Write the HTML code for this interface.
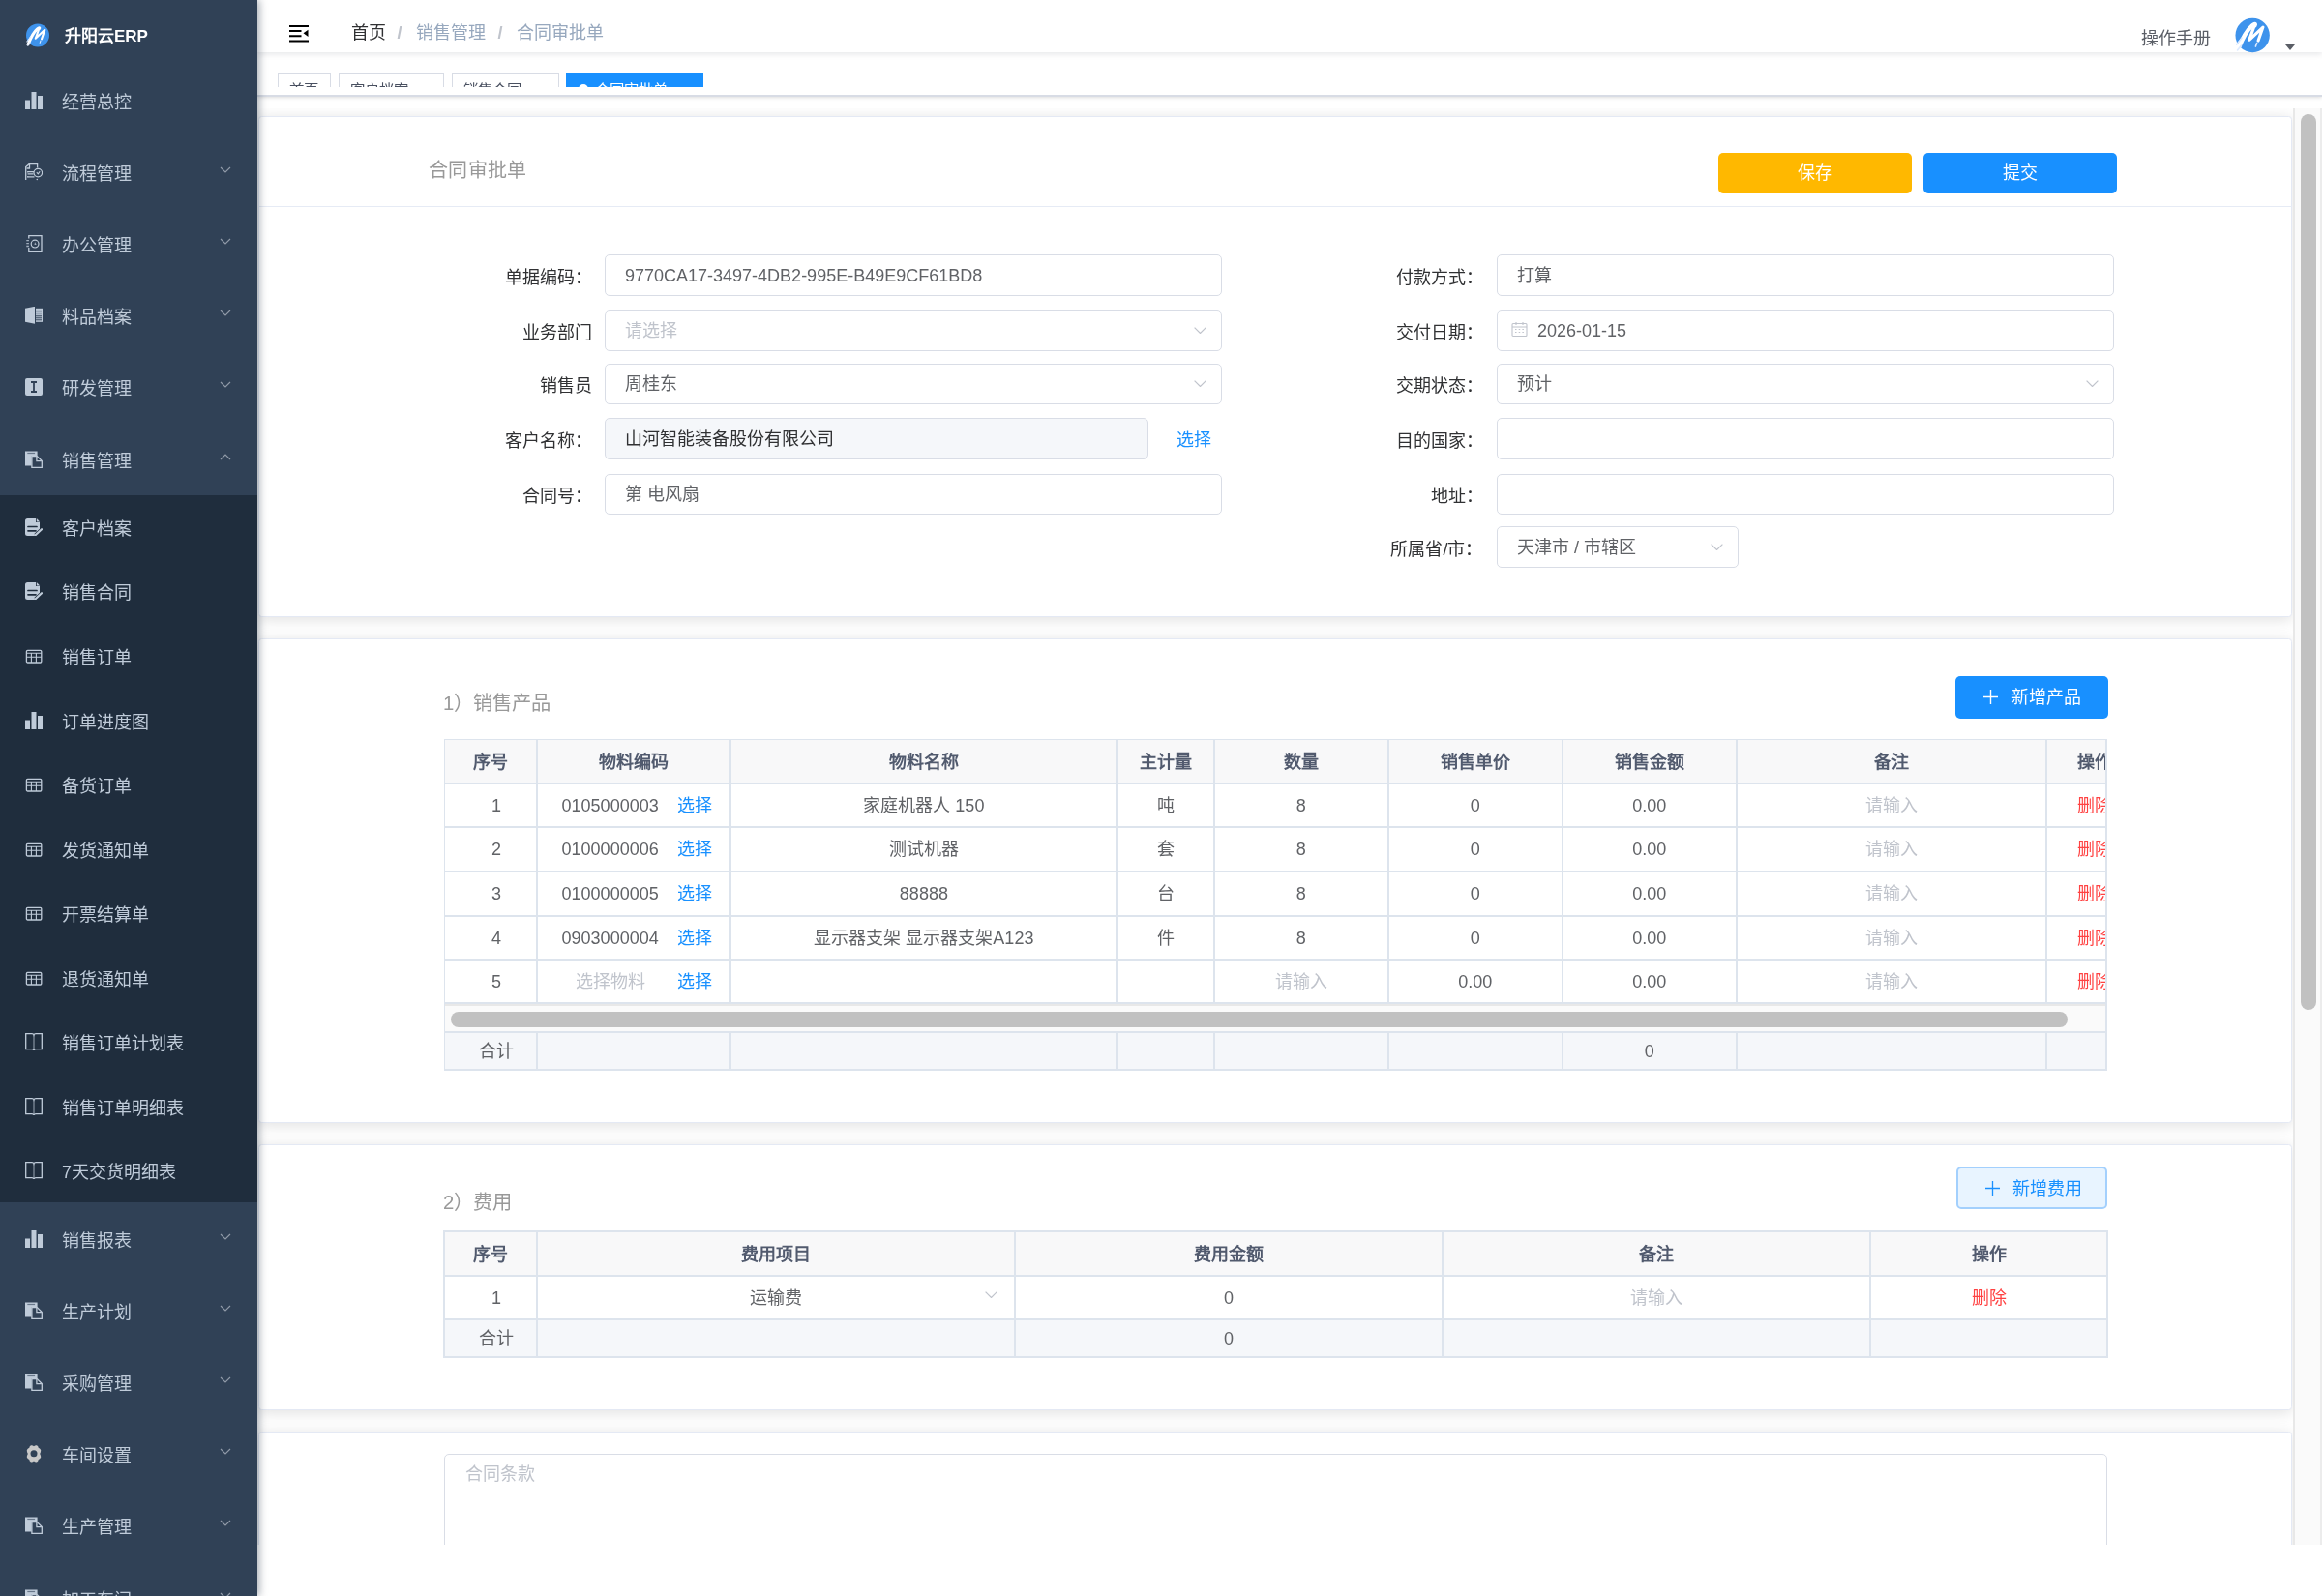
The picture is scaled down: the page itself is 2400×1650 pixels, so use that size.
<!DOCTYPE html><html lang="zh-CN"><head><meta charset="utf-8"><title>合同审批单</title><style>
*{box-sizing:border-box;margin:0;padding:0}
html,body{width:2400px;height:1650px;overflow:hidden;background:#fff;font-family:'Liberation Sans',sans-serif;font-size:18px;color:#606266}
.a{position:absolute}
#side,#nav,#tags,#scroll{will-change:transform}
.t{position:absolute;white-space:nowrap;line-height:1}
#side{left:0;top:0;width:266px;height:1650px;background:#304156;box-shadow:2px 0 8px rgba(0,21,41,.35);z-index:5;overflow:hidden}
.mi{position:absolute;left:0;width:266px;color:#bfcbd9;font-size:18px}
.mi .tx{position:absolute;left:64px;white-space:nowrap}
.mi svg.ic{position:absolute;left:26px}
.chev{position:absolute;left:227px;width:12px;height:7px}
#nav{left:266px;top:0;width:2134px;height:54px;background:#fff;box-shadow:0 1.5px 6px rgba(0,21,41,.1);z-index:3}
#tags{left:266px;top:54px;width:2134px;height:46px;background:#fff;border-bottom:2px solid #d8dce5;box-shadow:0 1px 4px 0 rgba(0,0,0,.12),0 0 4px 0 rgba(0,0,0,.04);z-index:2}
#scroll{left:266px;top:112px;width:2134px;height:1485px;overflow:hidden;background:#fff;z-index:1}
.card{position:absolute;left:1.3px;width:2102px;background:#fff;border:1.7px solid #e4e9f4;border-radius:3.5px;box-shadow:0 2.6px 15px 0 rgba(0,0,0,.12)}
.lbl{position:absolute;text-align:right;color:#303133;font-size:18px;white-space:nowrap}
.inp{position:absolute;border:1.8px solid #d9dde6;border-radius:5px;background:#fff}
.inp .v{position:absolute;left:21px;white-space:nowrap;color:#606266}
.ph{color:#c0c4cc!important}
.btn{position:absolute;border-radius:5px;color:#fff;font-size:18px;text-align:center}
table.tb{position:absolute;border-collapse:collapse;table-layout:fixed;font-size:18px;color:#606266}
table.tb td,table.tb th{border:1.3px solid #dfe6ec;text-align:center;white-space:nowrap;overflow:hidden;padding:0}
table.tb th{background:#f8f8f9;color:#515a6e;font-weight:bold}
.lnk{color:#1890ff}
.del{color:#ff4242}
</style></head><body>
<div id="side" class="a">
<svg class="a" style="left:26px;top:24px" width="26" height="26" viewBox="0 0 26 26"><circle cx="13" cy="12.5" r="12" fill="#3e93ec"/>
<path d="M3 22 C5 17 9 9 12.5 6 C13.5 5 15.5 4 14.6 5.5" fill="none" stroke="#fff" stroke-width="3" stroke-linecap="round"/>
<path d="M14.6 5 L10.7 15.8 L20.3 6.8 L17 16.3" fill="none" stroke="#fff" stroke-width="2.1" stroke-linecap="round" stroke-linejoin="round"/>
<path d="M1.8 19l3.6-4.6M2.4 23l2.6-3.2M16 18l-.8 2.4" stroke="#dceaff" stroke-width="1.1" stroke-linecap="round"/></svg>
<div class="t" style="left:67px;top:29px;font-size:17px;font-weight:bold;color:#fff">升阳云ERP</div>
<div class="mi" style="top:66.50px;height:74.2px">
<svg class="ic" width="18" height="18" viewBox="0 0 18 18" style="top:28.1px"><path d="M0 8.5h5V18H0zM6.5 0h5v18h-5zM13 4h5v14h-5z" fill="#bfcbd9"/></svg>
<div class="tx" style="top:30.10px;line-height:1">经营总控</div>
</div>
<div class="mi" style="top:140.70px;height:74.2px">
<svg class="ic" width="18" height="18" viewBox="0 0 18 18" style="top:28.1px"><path d="M0.7 17V3.6L4 0.7h8.6v3.8" fill="none" stroke="#bfcbd9" stroke-width="1.3"/><path d="M4.5 1v4H1.5" fill="none" stroke="#bfcbd9" stroke-width="1.3"/><path d="M2.5 8.7h6.5M2.5 10.8h6M2.5 13.8h7" stroke="#bfcbd9" stroke-width="1.2"/><path d="M2.2 8.7h1M2.2 13.8h1" stroke="#bfcbd9" stroke-width="1.4"/><circle cx="13.3" cy="9.6" r="4.3" fill="#304156" stroke="#bfcbd9" stroke-width="1.2"/><path d="M11.8 9.2l1.5 1.6 1.9-2.6" fill="none" stroke="#bfcbd9" stroke-width="1.1"/><circle cx="12.3" cy="16.5" r=".8" fill="#bfcbd9"/></svg>
<div class="tx" style="top:30.10px;line-height:1">流程管理</div>
<svg class="chev" viewBox="0 0 12 7" style="top:31.10px"><path d="M1 1 L6 6 L11 1" fill="none" stroke="#909aa8" stroke-width="1.2"/></svg>
</div>
<div class="mi" style="top:214.90px;height:74.2px">
<svg class="ic" width="18" height="18" viewBox="0 0 18 18" style="top:28.1px"><path d="M3.8 3.5V0.7h13.2v16.6H3.8V13" fill="none" stroke="#bfcbd9" stroke-width="1.3"/><path d="M1.3 5.6h2.6M1.3 8.7h2.6M1.3 11.5h2.6" stroke="#bfcbd9" stroke-width="1.3" opacity=".8"/><circle cx="10.1" cy="9.1" r="3.9" fill="none" stroke="#bfcbd9" stroke-width="1.2"/><path d="M10.1 7.3l1.6 2.8h-2.2z" fill="#bfcbd9" opacity=".8"/></svg>
<div class="tx" style="top:30.10px;line-height:1">办公管理</div>
<svg class="chev" viewBox="0 0 12 7" style="top:31.10px"><path d="M1 1 L6 6 L11 1" fill="none" stroke="#909aa8" stroke-width="1.2"/></svg>
</div>
<div class="mi" style="top:289.10px;height:74.2px">
<svg class="ic" width="18" height="18" viewBox="0 0 18 18" style="top:28.1px"><path d="M0 1.8L10 -0.2v18L0 15.8z" fill="#bfcbd9"/><rect x="11" y="1.8" width="7" height="14" fill="#bfcbd9"/><path d="M11 3.8h6M11 5.8h6M11 7.8h6" stroke="#8593a6" stroke-width=".9"/><path d="M11 9.8h6M11 11.8h6M11 13.8h6" stroke="#304156" stroke-width="1"/></svg>
<div class="tx" style="top:30.10px;line-height:1">料品档案</div>
<svg class="chev" viewBox="0 0 12 7" style="top:31.10px"><path d="M1 1 L6 6 L11 1" fill="none" stroke="#909aa8" stroke-width="1.2"/></svg>
</div>
<div class="mi" style="top:363.30px;height:74.2px">
<svg class="ic" width="18" height="18" viewBox="0 0 18 18" style="top:28.1px"><rect x="0" y="0" width="18" height="18" rx="2" fill="#bfcbd9"/><path d="M6 4h6M9 4v10M6 14h6" stroke="#304156" stroke-width="1.8"/></svg>
<div class="tx" style="top:30.10px;line-height:1">研发管理</div>
<svg class="chev" viewBox="0 0 12 7" style="top:31.10px"><path d="M1 1 L6 6 L11 1" fill="none" stroke="#909aa8" stroke-width="1.2"/></svg>
</div>
<div class="mi" style="top:437.50px;height:74.2px">
<svg class="ic" width="18" height="18" viewBox="0 0 18 18" style="top:28.1px"><path d="M0 0.4h12.6v4.6H6.6v10.4H0z" fill="#bfcbd9"/><path d="M2.3 1.9h7.8v1.2H2.3z" fill="#304156" opacity=".6"/><path d="M6.9 5.6h5.4l5 5v6.8H6.9z" fill="none" stroke="#bfcbd9" stroke-width="1.3"/><path d="M11.9 5.8v4.8h5" fill="none" stroke="#bfcbd9" stroke-width="1.3"/></svg>
<div class="tx" style="top:30.10px;line-height:1">销售管理</div>
<svg class="chev" viewBox="0 0 12 7" style="top:31.10px"><path d="M1 6 L6 1 L11 6" fill="none" stroke="#909aa8" stroke-width="1.2"/></svg>
</div>
<div class="a" style="left:0;top:511.70px;width:266px;height:731.72px;background:#1f2d3d"></div>
<div class="mi" style="top:511.70px;height:66.52px">
<svg class="ic" width="18" height="18" viewBox="0 0 18 18" style="top:24.259999999999998px"><path d="M0 2.5Q0 0 2.5 0H11v4h4v8.5l-5.5 5.5H2.5Q0 18 0 15.5z" fill="#bfcbd9"/><path d="M11.8 0l3.4 3.4h-3.4z" fill="#bfcbd9"/><path d="M3 8.5h9M3 12.8h8" stroke="#1f2d3d" stroke-width="1.7" stroke-linecap="round"/><path d="M10.6 17.2l6.4-6" stroke="#1f2d3d" stroke-width="3.6"/><path d="M10.6 17.2l6.4-6" stroke="#bfcbd9" stroke-width="2.2" stroke-linecap="round"/></svg>
<div class="tx" style="top:26.26px;line-height:1">客户档案</div>
</div>
<div class="mi" style="top:578.22px;height:66.52px">
<svg class="ic" width="18" height="18" viewBox="0 0 18 18" style="top:24.259999999999998px"><path d="M0 2.5Q0 0 2.5 0H11v4h4v8.5l-5.5 5.5H2.5Q0 18 0 15.5z" fill="#bfcbd9"/><path d="M11.8 0l3.4 3.4h-3.4z" fill="#bfcbd9"/><path d="M3 8.5h9M3 12.8h8" stroke="#1f2d3d" stroke-width="1.7" stroke-linecap="round"/><path d="M10.6 17.2l6.4-6" stroke="#1f2d3d" stroke-width="3.6"/><path d="M10.6 17.2l6.4-6" stroke="#bfcbd9" stroke-width="2.2" stroke-linecap="round"/></svg>
<div class="tx" style="top:26.26px;line-height:1">销售合同</div>
</div>
<div class="mi" style="top:644.74px;height:66.52px">
<svg class="ic" width="18" height="18" viewBox="0 0 18 18" style="top:24.259999999999998px"><rect x="1.4" y="3.4" width="15.4" height="12.6" rx="1.2" fill="none" stroke="#bfcbd9" stroke-width="1.3"/><path d="M1.4 6.3h15.4M1.4 10.3h15.4M6.4 6.3v9.7M11.4 6.3v9.7" stroke="#bfcbd9" stroke-width="1.1"/></svg>
<div class="tx" style="top:26.26px;line-height:1">销售订单</div>
</div>
<div class="mi" style="top:711.26px;height:66.52px">
<svg class="ic" width="18" height="18" viewBox="0 0 18 18" style="top:24.259999999999998px"><path d="M0 8.5h5V18H0zM6.5 0h5v18h-5zM13 4h5v14h-5z" fill="#bfcbd9"/></svg>
<div class="tx" style="top:26.26px;line-height:1">订单进度图</div>
</div>
<div class="mi" style="top:777.78px;height:66.52px">
<svg class="ic" width="18" height="18" viewBox="0 0 18 18" style="top:24.259999999999998px"><rect x="1.4" y="3.4" width="15.4" height="12.6" rx="1.2" fill="none" stroke="#bfcbd9" stroke-width="1.3"/><path d="M1.4 6.3h15.4M1.4 10.3h15.4M6.4 6.3v9.7M11.4 6.3v9.7" stroke="#bfcbd9" stroke-width="1.1"/></svg>
<div class="tx" style="top:26.26px;line-height:1">备货订单</div>
</div>
<div class="mi" style="top:844.30px;height:66.52px">
<svg class="ic" width="18" height="18" viewBox="0 0 18 18" style="top:24.259999999999998px"><rect x="1.4" y="3.4" width="15.4" height="12.6" rx="1.2" fill="none" stroke="#bfcbd9" stroke-width="1.3"/><path d="M1.4 6.3h15.4M1.4 10.3h15.4M6.4 6.3v9.7M11.4 6.3v9.7" stroke="#bfcbd9" stroke-width="1.1"/></svg>
<div class="tx" style="top:26.26px;line-height:1">发货通知单</div>
</div>
<div class="mi" style="top:910.82px;height:66.52px">
<svg class="ic" width="18" height="18" viewBox="0 0 18 18" style="top:24.259999999999998px"><rect x="1.4" y="3.4" width="15.4" height="12.6" rx="1.2" fill="none" stroke="#bfcbd9" stroke-width="1.3"/><path d="M1.4 6.3h15.4M1.4 10.3h15.4M6.4 6.3v9.7M11.4 6.3v9.7" stroke="#bfcbd9" stroke-width="1.1"/></svg>
<div class="tx" style="top:26.26px;line-height:1">开票结算单</div>
</div>
<div class="mi" style="top:977.34px;height:66.52px">
<svg class="ic" width="18" height="18" viewBox="0 0 18 18" style="top:24.259999999999998px"><rect x="1.4" y="3.4" width="15.4" height="12.6" rx="1.2" fill="none" stroke="#bfcbd9" stroke-width="1.3"/><path d="M1.4 6.3h15.4M1.4 10.3h15.4M6.4 6.3v9.7M11.4 6.3v9.7" stroke="#bfcbd9" stroke-width="1.1"/></svg>
<div class="tx" style="top:26.26px;line-height:1">退货通知单</div>
</div>
<div class="mi" style="top:1043.86px;height:66.52px">
<svg class="ic" width="18" height="18" viewBox="0 0 18 18" style="top:24.259999999999998px"><path d="M0.7 0.7h6.3q1.6 0 2 1.2q.4-1.2 2-1.2h6.3v16h-6.3q-1.6 0-2 1.2q-.4-1.2-2-1.2H0.7z" fill="none" stroke="#bfcbd9" stroke-width="1.3"/><path d="M9 2v15" stroke="#bfcbd9" stroke-width="1.3" opacity=".6"/></svg>
<div class="tx" style="top:26.26px;line-height:1">销售订单计划表</div>
</div>
<div class="mi" style="top:1110.38px;height:66.52px">
<svg class="ic" width="18" height="18" viewBox="0 0 18 18" style="top:24.259999999999998px"><path d="M0.7 0.7h6.3q1.6 0 2 1.2q.4-1.2 2-1.2h6.3v16h-6.3q-1.6 0-2 1.2q-.4-1.2-2-1.2H0.7z" fill="none" stroke="#bfcbd9" stroke-width="1.3"/><path d="M9 2v15" stroke="#bfcbd9" stroke-width="1.3" opacity=".6"/></svg>
<div class="tx" style="top:26.26px;line-height:1">销售订单明细表</div>
</div>
<div class="mi" style="top:1176.90px;height:66.52px">
<svg class="ic" width="18" height="18" viewBox="0 0 18 18" style="top:24.259999999999998px"><path d="M0.7 0.7h6.3q1.6 0 2 1.2q.4-1.2 2-1.2h6.3v16h-6.3q-1.6 0-2 1.2q-.4-1.2-2-1.2H0.7z" fill="none" stroke="#bfcbd9" stroke-width="1.3"/><path d="M9 2v15" stroke="#bfcbd9" stroke-width="1.3" opacity=".6"/></svg>
<div class="tx" style="top:26.26px;line-height:1">7天交货明细表</div>
</div>
<div class="mi" style="top:1243.42px;height:74.2px">
<svg class="ic" width="18" height="18" viewBox="0 0 18 18" style="top:28.1px"><path d="M0 8.5h5V18H0zM6.5 0h5v18h-5zM13 4h5v14h-5z" fill="#bfcbd9"/></svg>
<div class="tx" style="top:30.10px;line-height:1">销售报表</div>
<svg class="chev" viewBox="0 0 12 7" style="top:31.10px"><path d="M1 1 L6 6 L11 1" fill="none" stroke="#909aa8" stroke-width="1.2"/></svg>
</div>
<div class="mi" style="top:1317.62px;height:74.2px">
<svg class="ic" width="18" height="18" viewBox="0 0 18 18" style="top:28.1px"><path d="M0 0.4h12.6v4.6H6.6v10.4H0z" fill="#bfcbd9"/><path d="M2.3 1.9h7.8v1.2H2.3z" fill="#304156" opacity=".6"/><path d="M6.9 5.6h5.4l5 5v6.8H6.9z" fill="none" stroke="#bfcbd9" stroke-width="1.3"/><path d="M11.9 5.8v4.8h5" fill="none" stroke="#bfcbd9" stroke-width="1.3"/></svg>
<div class="tx" style="top:30.10px;line-height:1">生产计划</div>
<svg class="chev" viewBox="0 0 12 7" style="top:31.10px"><path d="M1 1 L6 6 L11 1" fill="none" stroke="#909aa8" stroke-width="1.2"/></svg>
</div>
<div class="mi" style="top:1391.82px;height:74.2px">
<svg class="ic" width="18" height="18" viewBox="0 0 18 18" style="top:28.1px"><path d="M0 0.4h12.6v4.6H6.6v10.4H0z" fill="#bfcbd9"/><path d="M2.3 1.9h7.8v1.2H2.3z" fill="#304156" opacity=".6"/><path d="M6.9 5.6h5.4l5 5v6.8H6.9z" fill="none" stroke="#bfcbd9" stroke-width="1.3"/><path d="M11.9 5.8v4.8h5" fill="none" stroke="#bfcbd9" stroke-width="1.3"/></svg>
<div class="tx" style="top:30.10px;line-height:1">采购管理</div>
<svg class="chev" viewBox="0 0 12 7" style="top:31.10px"><path d="M1 1 L6 6 L11 1" fill="none" stroke="#909aa8" stroke-width="1.2"/></svg>
</div>
<div class="mi" style="top:1466.02px;height:74.2px">
<svg class="ic" width="18" height="18" viewBox="0 0 18 18" style="top:28.1px"><path d="M6 0.3q1.5-.4 3 .9q1.5-1.3 3-.9q1.6.6 1.7 2.5q1.9.7 2.4 2.3q.4 1.5-.9 3.8q1.3 2.3.9 3.8q-.5 1.6-2.4 2.3q-.1 1.9-1.7 2.5q-1.5.4-3-.9q-1.5 1.3-3 .9q-1.6-.6-1.7-2.5q-1.9-.7-2.4-2.3q-.4-1.5.9-3.8q-1.3-2.3-.9-3.8q.5-1.6 2.4-2.3q.1-1.9 1.7-2.5z" fill="#c8c8c8"/><circle cx="9" cy="8.8" r="3.5" fill="#304156"/></svg>
<div class="tx" style="top:30.10px;line-height:1">车间设置</div>
<svg class="chev" viewBox="0 0 12 7" style="top:31.10px"><path d="M1 1 L6 6 L11 1" fill="none" stroke="#909aa8" stroke-width="1.2"/></svg>
</div>
<div class="mi" style="top:1540.22px;height:74.2px">
<svg class="ic" width="18" height="18" viewBox="0 0 18 18" style="top:28.1px"><path d="M0 0.4h12.6v4.6H6.6v10.4H0z" fill="#bfcbd9"/><path d="M2.3 1.9h7.8v1.2H2.3z" fill="#304156" opacity=".6"/><path d="M6.9 5.6h5.4l5 5v6.8H6.9z" fill="none" stroke="#bfcbd9" stroke-width="1.3"/><path d="M11.9 5.8v4.8h5" fill="none" stroke="#bfcbd9" stroke-width="1.3"/></svg>
<div class="tx" style="top:30.10px;line-height:1">生产管理</div>
<svg class="chev" viewBox="0 0 12 7" style="top:31.10px"><path d="M1 1 L6 6 L11 1" fill="none" stroke="#909aa8" stroke-width="1.2"/></svg>
</div>
<div class="mi" style="top:1614.42px;height:74.2px">
<svg class="ic" width="18" height="18" viewBox="0 0 18 18" style="top:28.1px"><path d="M0 0.4h12.6v4.6H6.6v10.4H0z" fill="#bfcbd9"/><path d="M2.3 1.9h7.8v1.2H2.3z" fill="#304156" opacity=".6"/><path d="M6.9 5.6h5.4l5 5v6.8H6.9z" fill="none" stroke="#bfcbd9" stroke-width="1.3"/><path d="M11.9 5.8v4.8h5" fill="none" stroke="#bfcbd9" stroke-width="1.3"/></svg>
<div class="tx" style="top:30.10px;line-height:1">加工车间</div>
<svg class="chev" viewBox="0 0 12 7" style="top:31.10px"><path d="M1 1 L6 6 L11 1" fill="none" stroke="#909aa8" stroke-width="1.2"/></svg>
</div>
</div>
<div id="nav" class="a">
<svg class="a" style="left:32px;top:25px" width="22" height="19" viewBox="0 0 22 19"><path d="M1 1.9h20M1 7h12.5M1 12.2h12.5M1 17.6h20" stroke="#000" stroke-width="2"/><path d="M15.5 9.3l5-3.6v7.2z" fill="#000"/></svg>
<div class="t" style="left:96.5px;top:24.7px;color:#303133">首页</div>
<div class="t" style="left:144.5px;top:24.7px;color:#c0c4cc;font-weight:bold">/</div>
<div class="t" style="left:164px;top:24.7px;color:#97a8be">销售管理</div>
<div class="t" style="left:248.5px;top:24.7px;color:#c0c4cc;font-weight:bold">/</div>
<div class="t" style="left:268px;top:24.7px;color:#97a8be">合同审批单</div>
<div class="t" style="left:1947px;top:31px;color:#5a5e66">操作手册</div>
<svg class="a" style="left:2042.5px;top:17.9px" width="38.35" height="38.35" viewBox="0 0 26 26"><circle cx="13" cy="12.5" r="12" fill="#3e93ec"/>
<path d="M3 22 C5 17 9 9 12.5 6 C13.5 5 15.5 4 14.6 5.5" fill="none" stroke="#fff" stroke-width="3" stroke-linecap="round"/>
<path d="M14.6 5 L10.7 15.8 L20.3 6.8 L17 16.3" fill="none" stroke="#fff" stroke-width="2.1" stroke-linecap="round" stroke-linejoin="round"/>
<path d="M1.8 19l3.6-4.6M2.4 23l2.6-3.2M16 18l-.8 2.4" stroke="#dceaff" stroke-width="1.1" stroke-linecap="round"/></svg>
<svg class="a" style="left:2095.5px;top:46px" width="10" height="6" viewBox="0 0 10 6"><path d="M0 0h10L5 6z" fill="#5a5e66"/></svg>
</div>
<div id="tags" class="a">
<div class="a" style="left:0;top:0;width:2134px;height:35.6px;overflow:hidden">
<div class="a" style="left:21.2px;top:21px;width:54.6px;height:34px;background:#fff;border:1.8px solid #d8dce5;color:#495060;font-size:15.4px">
<div class="t" style="left:11px;top:9.8px">首页</div>
</div>
<div class="a" style="left:84.1px;top:21px;width:109.3px;height:34px;background:#fff;border:1.8px solid #d8dce5;color:#495060;font-size:15.4px">
<div class="t" style="left:10.5px;top:9.8px">客户档案</div>
</div>
<div class="a" style="left:201.0px;top:21px;width:110.7px;height:34px;background:#fff;border:1.8px solid #d8dce5;color:#495060;font-size:15.4px">
<div class="t" style="left:10.5px;top:9.8px">销售合同</div>
</div>
<div class="a" style="left:318.9px;top:21px;width:142.0px;height:34px;background:#1890ff;border:1.8px solid #1890ff;color:#fff;font-size:15.4px">
<div class="a" style="left:12px;top:10.5px;width:10px;height:10px;border-radius:5px;background:#fff"></div>
<div class="t" style="left:29px;top:9.8px">合同审批单</div>
</div>
</div></div>
<div id="scroll" class="a">
<div class="card" style="top:8.0px;height:518.0px"></div>
<div class="card" style="top:548.0px;height:501.0px"></div>
<div class="card" style="top:1071.0px;height:274.5px"></div>
<div class="card" style="top:1367.6px;height:220.4px"></div>
<div class="t" style="left:177.3px;top:54.0px;font-size:20px;color:#999;letter-spacing:.2px">合同审批单</div>
<div class="btn" style="left:1510.0px;top:46.0px;width:200.0px;height:41.7px;background:#ffb800;color:#fff;"><div class="t" style="left:0;width:100%;top:12px;text-align:center">保存</div></div>
<div class="btn" style="left:1722.0px;top:46.0px;width:200.0px;height:41.7px;background:#1890ff;color:#fff;"><div class="t" style="left:0;width:100%;top:12px;text-align:center">提交</div></div>
<div class="a" style="left:2px;top:101px;width:2101px;height:1.4px;background:#e6ebf5"></div>
<div class="lbl" style="left:45.5px;width:300px;top:165.9px;line-height:1">单据编码：</div>
<div class="lbl" style="left:45.5px;width:300px;top:223.1px;line-height:1">业务部门</div>
<div class="lbl" style="left:45.5px;width:300px;top:278.3px;line-height:1">销售员</div>
<div class="lbl" style="left:45.5px;width:300px;top:334.9px;line-height:1">客户名称：</div>
<div class="lbl" style="left:45.5px;width:300px;top:392.3px;line-height:1">合同号：</div>
<div class="lbl" style="left:966.5px;width:300px;top:165.9px;line-height:1">付款方式：</div>
<div class="lbl" style="left:966.5px;width:300px;top:223.1px;line-height:1">交付日期：</div>
<div class="lbl" style="left:966.5px;width:300px;top:278.3px;line-height:1">交期状态：</div>
<div class="lbl" style="left:966.5px;width:300px;top:334.9px;line-height:1">目的国家：</div>
<div class="lbl" style="left:966.5px;width:300px;top:392.3px;line-height:1">地址：</div>
<div class="lbl" style="left:966.5px;width:300px;top:446.9px;line-height:1">所属省/市：</div>
<div class="inp" style="left:358.5px;top:151.4px;width:638.9px;height:42.5px;background:#fff"></div>
<div class="t" style="left:380.0px;top:163.9px;color:#606266">9770CA17-3497-4DB2-995E-B49E9CF61BD8</div>
<div class="inp" style="left:358.5px;top:208.6px;width:638.9px;height:42.5px;background:#fff"></div>
<div class="t" style="left:380.0px;top:221.1px;color:#c0c4cc">请选择</div>
<svg class="a" style="left:967.7px;top:226.1px" width="13" height="7" viewBox="0 0 13 7"><path d="M.6.6l5.9 5.9L12.4.6" fill="none" stroke="#c0c4cc" stroke-width="1.2"/></svg>
<div class="inp" style="left:358.5px;top:263.8px;width:638.9px;height:42.5px;background:#fff"></div>
<div class="t" style="left:380.0px;top:276.3px;color:#606266">周桂东</div>
<svg class="a" style="left:967.7px;top:281.3px" width="13" height="7" viewBox="0 0 13 7"><path d="M.6.6l5.9 5.9L12.4.6" fill="none" stroke="#c0c4cc" stroke-width="1.2"/></svg>
<div class="inp" style="left:358.5px;top:320.4px;width:562.7px;height:42.5px;background:#f5f7fa"></div>
<div class="t" style="left:380.0px;top:332.9px;color:#303133">山河智能装备股份有限公司</div>
<div class="t" style="left:950.0px;top:333.9px;color:#1890ff">选择</div>
<div class="inp" style="left:358.5px;top:377.8px;width:638.9px;height:42.5px;background:#fff"></div>
<div class="t" style="left:380.0px;top:390.3px;color:#606266">第 电风扇</div>
<div class="inp" style="left:1280.5px;top:151.4px;width:638.8px;height:42.5px;background:#fff"></div>
<div class="t" style="left:1302.0px;top:163.9px;color:#606266">打算</div>
<div class="inp" style="left:1280.5px;top:208.6px;width:638.8px;height:42.5px;background:#fff"></div>
<div class="t" style="left:1323.0px;top:221.1px;color:#606266">2026-01-15</div>
<svg class="a" style="left:1295.5px;top:220.4px" width="17" height="17" viewBox="0 0 17 17"><rect x="1" y="2.5" width="15" height="13" rx="1" fill="none" stroke="#c0c4cc" stroke-width="1.1"/><path d="M1 6h15M5 1v3M12 1v3" stroke="#c0c4cc" stroke-width="1.1"/><path d="M4 8.5h1.5M7.7 8.5h1.5M11.4 8.5h1.5M4 11.5h1.5M7.7 11.5h1.5M11.4 11.5h1.5" stroke="#c0c4cc" stroke-width="1.1"/></svg>
<div class="inp" style="left:1280.5px;top:263.8px;width:638.8px;height:42.5px;background:#fff"></div>
<div class="t" style="left:1302.0px;top:276.3px;color:#606266">预计</div>
<svg class="a" style="left:1889.5px;top:281.3px" width="13" height="7" viewBox="0 0 13 7"><path d="M.6.6l5.9 5.9L12.4.6" fill="none" stroke="#c0c4cc" stroke-width="1.2"/></svg>
<div class="inp" style="left:1280.5px;top:320.4px;width:638.8px;height:42.5px;background:#fff"></div>
<div class="inp" style="left:1280.5px;top:377.8px;width:638.8px;height:42.5px;background:#fff"></div>
<div class="inp" style="left:1280.5px;top:432.4px;width:250.5px;height:42.5px;background:#fff"></div>
<div class="t" style="left:1302.0px;top:444.9px;color:#606266">天津市 / 市辖区</div>
<svg class="a" style="left:1501.5px;top:449.9px" width="13" height="7" viewBox="0 0 13 7"><path d="M.6.6l5.9 5.9L12.4.6" fill="none" stroke="#c0c4cc" stroke-width="1.2"/></svg>
<div class="t" style="left:192.0px;top:605.0px;font-size:20.3px;color:#999">1）销售产品</div>
<div class="btn" style="left:1755.0px;top:586.9px;width:158.0px;height:43.8px;background:#1890ff;color:#fff;"><svg class="a" style="left:29px;top:14.5px" width="15" height="15" viewBox="0 0 15 15"><path d="M7.5 0v15M0 7.5h15" stroke="#fff" stroke-width="1.4"/></svg><div class="t" style="left:58px;top:13px">新增产品</div></div>
<div class="a" style="left:193.0px;top:652.0px;width:1719.3px;height:342.5px;overflow:hidden;border-right:2px solid #dde4ed">
<div class="a" style="left:0;top:0;width:1781px;height:45.6px;background:#f8f8f9"></div>
<div class="a" style="left:0;top:303.0px;width:1781px;height:39.5px;background:#f5f7fa"></div>
<div class="a" style="left:0;top:274.0px;width:1781px;height:29.0px;background:#fafafa"></div>
<div class="a" style="left:0;top:273.0px;width:1781px;height:3px;background:#e8e8e8"></div>
<div class="a" style="left:7.0px;top:282.0px;width:1671.0px;height:16px;border-radius:8px;background:#c1c1c1"></div>
<div class="a" style="left:0;top:-1.0px;width:1781px;height:2px;background:#dde4ed"></div>
<div class="a" style="left:0;top:44.6px;width:1781px;height:2px;background:#dde4ed"></div>
<div class="a" style="left:0;top:89.9px;width:1781px;height:2px;background:#dde4ed"></div>
<div class="a" style="left:0;top:136.0px;width:1781px;height:2px;background:#dde4ed"></div>
<div class="a" style="left:0;top:181.7px;width:1781px;height:2px;background:#dde4ed"></div>
<div class="a" style="left:0;top:226.9px;width:1781px;height:2px;background:#dde4ed"></div>
<div class="a" style="left:0;top:272.0px;width:1781px;height:2px;background:#dde4ed"></div>
<div class="a" style="left:0;top:302.0px;width:1781px;height:2px;background:#dde4ed"></div>
<div class="a" style="left:0;top:340.5px;width:1781px;height:2px;background:#dde4ed"></div>
<div class="a" style="left:-1.0px;top:0;width:2px;height:273.0px;background:#dde4ed"></div>
<div class="a" style="left:-1.0px;top:303.0px;width:2px;height:39.5px;background:#dde4ed"></div>
<div class="a" style="left:94.8px;top:0;width:2px;height:273.0px;background:#dde4ed"></div>
<div class="a" style="left:94.8px;top:303.0px;width:2px;height:39.5px;background:#dde4ed"></div>
<div class="a" style="left:294.8px;top:0;width:2px;height:273.0px;background:#dde4ed"></div>
<div class="a" style="left:294.8px;top:303.0px;width:2px;height:39.5px;background:#dde4ed"></div>
<div class="a" style="left:695.0px;top:0;width:2px;height:273.0px;background:#dde4ed"></div>
<div class="a" style="left:695.0px;top:303.0px;width:2px;height:39.5px;background:#dde4ed"></div>
<div class="a" style="left:794.6px;top:0;width:2px;height:273.0px;background:#dde4ed"></div>
<div class="a" style="left:794.6px;top:303.0px;width:2px;height:39.5px;background:#dde4ed"></div>
<div class="a" style="left:974.8px;top:0;width:2px;height:273.0px;background:#dde4ed"></div>
<div class="a" style="left:974.8px;top:303.0px;width:2px;height:39.5px;background:#dde4ed"></div>
<div class="a" style="left:1154.8px;top:0;width:2px;height:273.0px;background:#dde4ed"></div>
<div class="a" style="left:1154.8px;top:303.0px;width:2px;height:39.5px;background:#dde4ed"></div>
<div class="a" style="left:1334.9px;top:0;width:2px;height:273.0px;background:#dde4ed"></div>
<div class="a" style="left:1334.9px;top:303.0px;width:2px;height:39.5px;background:#dde4ed"></div>
<div class="a" style="left:1654.8px;top:0;width:2px;height:273.0px;background:#dde4ed"></div>
<div class="a" style="left:1654.8px;top:303.0px;width:2px;height:39.5px;background:#dde4ed"></div>
<div class="a" style="left:-1px;top:0;width:2px;height:342.5px;background:#dde4ed"></div>
<div class="t" style="left:0.0px;width:95.8px;text-align:center;top:15.0px;font-weight:bold;color:#515a6e">序号</div>
<div class="t" style="left:95.8px;width:200.0px;text-align:center;top:15.0px;font-weight:bold;color:#515a6e">物料编码</div>
<div class="t" style="left:295.8px;width:400.2px;text-align:center;top:15.0px;font-weight:bold;color:#515a6e">物料名称</div>
<div class="t" style="left:696.0px;width:99.6px;text-align:center;top:15.0px;font-weight:bold;color:#515a6e">主计量</div>
<div class="t" style="left:795.6px;width:180.2px;text-align:center;top:15.0px;font-weight:bold;color:#515a6e">数量</div>
<div class="t" style="left:975.8px;width:180.0px;text-align:center;top:15.0px;font-weight:bold;color:#515a6e">销售单价</div>
<div class="t" style="left:1155.8px;width:180.1px;text-align:center;top:15.0px;font-weight:bold;color:#515a6e">销售金额</div>
<div class="t" style="left:1335.9px;width:319.9px;text-align:center;top:15.0px;font-weight:bold;color:#515a6e">备注</div>
<div class="t" style="left:1655.8px;width:100.8px;text-align:center;top:15.0px;font-weight:bold;color:#515a6e">操作</div>
<div class="t" style="left:6.0px;width:95.8px;text-align:center;top:59.6px">1</div>
<div class="t" style="left:92.3px;width:158.7px;text-align:center;top:59.6px;">0105000003</div>
<div class="t" style="left:241.0px;top:59.6px;color:#1890ff">选择</div>
<div class="t" style="left:295.8px;width:400.2px;text-align:center;top:59.6px">家庭机器人 150</div>
<div class="t" style="left:696.0px;width:99.6px;text-align:center;top:59.6px">吨</div>
<div class="t" style="left:795.6px;width:180.2px;text-align:center;top:59.6px">8</div>
<div class="t" style="left:975.8px;width:180.0px;text-align:center;top:59.6px">0</div>
<div class="t" style="left:1155.8px;width:180.1px;text-align:center;top:59.6px">0.00</div>
<div class="t" style="left:1335.9px;width:319.9px;text-align:center;top:59.6px"><span style="color:#c0c4cc">请输入</span></div>
<div class="t" style="left:1655.8px;width:100.8px;text-align:center;top:59.6px"><span style="color:#ff4242">删除</span></div>
<div class="t" style="left:6.0px;width:95.8px;text-align:center;top:104.9px">2</div>
<div class="t" style="left:92.3px;width:158.7px;text-align:center;top:104.9px;">0100000006</div>
<div class="t" style="left:241.0px;top:104.9px;color:#1890ff">选择</div>
<div class="t" style="left:295.8px;width:400.2px;text-align:center;top:104.9px">测试机器</div>
<div class="t" style="left:696.0px;width:99.6px;text-align:center;top:104.9px">套</div>
<div class="t" style="left:795.6px;width:180.2px;text-align:center;top:104.9px">8</div>
<div class="t" style="left:975.8px;width:180.0px;text-align:center;top:104.9px">0</div>
<div class="t" style="left:1155.8px;width:180.1px;text-align:center;top:104.9px">0.00</div>
<div class="t" style="left:1335.9px;width:319.9px;text-align:center;top:104.9px"><span style="color:#c0c4cc">请输入</span></div>
<div class="t" style="left:1655.8px;width:100.8px;text-align:center;top:104.9px"><span style="color:#ff4242">删除</span></div>
<div class="t" style="left:6.0px;width:95.8px;text-align:center;top:151.0px">3</div>
<div class="t" style="left:92.3px;width:158.7px;text-align:center;top:151.0px;">0100000005</div>
<div class="t" style="left:241.0px;top:151.0px;color:#1890ff">选择</div>
<div class="t" style="left:295.8px;width:400.2px;text-align:center;top:151.0px">88888</div>
<div class="t" style="left:696.0px;width:99.6px;text-align:center;top:151.0px">台</div>
<div class="t" style="left:795.6px;width:180.2px;text-align:center;top:151.0px">8</div>
<div class="t" style="left:975.8px;width:180.0px;text-align:center;top:151.0px">0</div>
<div class="t" style="left:1155.8px;width:180.1px;text-align:center;top:151.0px">0.00</div>
<div class="t" style="left:1335.9px;width:319.9px;text-align:center;top:151.0px"><span style="color:#c0c4cc">请输入</span></div>
<div class="t" style="left:1655.8px;width:100.8px;text-align:center;top:151.0px"><span style="color:#ff4242">删除</span></div>
<div class="t" style="left:6.0px;width:95.8px;text-align:center;top:196.7px">4</div>
<div class="t" style="left:92.3px;width:158.7px;text-align:center;top:196.7px;">0903000004</div>
<div class="t" style="left:241.0px;top:196.7px;color:#1890ff">选择</div>
<div class="t" style="left:295.8px;width:400.2px;text-align:center;top:196.7px">显示器支架 显示器支架A123</div>
<div class="t" style="left:696.0px;width:99.6px;text-align:center;top:196.7px">件</div>
<div class="t" style="left:795.6px;width:180.2px;text-align:center;top:196.7px">8</div>
<div class="t" style="left:975.8px;width:180.0px;text-align:center;top:196.7px">0</div>
<div class="t" style="left:1155.8px;width:180.1px;text-align:center;top:196.7px">0.00</div>
<div class="t" style="left:1335.9px;width:319.9px;text-align:center;top:196.7px"><span style="color:#c0c4cc">请输入</span></div>
<div class="t" style="left:1655.8px;width:100.8px;text-align:center;top:196.7px"><span style="color:#ff4242">删除</span></div>
<div class="t" style="left:6.0px;width:95.8px;text-align:center;top:241.9px">5</div>
<div class="t" style="left:92.3px;width:158.7px;text-align:center;top:241.9px;color:#c0c4cc">选择物料</div>
<div class="t" style="left:241.0px;top:241.9px;color:#1890ff">选择</div>
<div class="t" style="left:795.6px;width:180.2px;text-align:center;top:241.9px"><span style="color:#c0c4cc">请输入</span></div>
<div class="t" style="left:975.8px;width:180.0px;text-align:center;top:241.9px">0.00</div>
<div class="t" style="left:1155.8px;width:180.1px;text-align:center;top:241.9px">0.00</div>
<div class="t" style="left:1335.9px;width:319.9px;text-align:center;top:241.9px"><span style="color:#c0c4cc">请输入</span></div>
<div class="t" style="left:1655.8px;width:100.8px;text-align:center;top:241.9px"><span style="color:#ff4242">删除</span></div>
<div class="t" style="left:6.0px;width:95.8px;text-align:center;top:314.0px">合计</div>
<div class="t" style="left:1155.8px;width:180.1px;text-align:center;top:314.0px">0</div>
</div>
<div class="t" style="left:192.0px;top:1120.6px;font-size:20.3px;color:#999">2）费用</div>
<div class="btn" style="left:1755.7px;top:1094.0px;width:156.8px;height:43.5px;background:#e8f4ff;color:#1890ff;border:2px solid #a3d0fd;"><svg class="a" style="left:28px;top:13px" width="15" height="15" viewBox="0 0 15 15"><path d="M7.5 0v15M0 7.5h15" stroke="#1890ff" stroke-width="1.3"/></svg><div class="t" style="left:56.5px;top:11.5px">新增费用</div></div>
<div class="a" style="left:193.0px;top:1160.9px;width:1719.3px;height:131.1px">
<div class="a" style="left:0;top:0;width:1719.3000000000002px;height:45.8px;background:#f8f8f9"></div>
<div class="a" style="left:0;top:91.1px;width:1719.3000000000002px;height:39.1px;background:#f5f7fa"></div>
<div class="a" style="left:0;top:-1.0px;width:1719.3000000000002px;height:2px;background:#dde4ed"></div>
<div class="a" style="left:0;top:44.8px;width:1719.3000000000002px;height:2px;background:#dde4ed"></div>
<div class="a" style="left:0;top:90.1px;width:1719.3000000000002px;height:2px;background:#dde4ed"></div>
<div class="a" style="left:0;top:129.2px;width:1719.3000000000002px;height:2px;background:#dde4ed"></div>
<div class="a" style="left:-1.0px;top:-1px;width:2px;height:132.2px;background:#dde4ed"></div>
<div class="a" style="left:94.8px;top:-1px;width:2px;height:132.2px;background:#dde4ed"></div>
<div class="a" style="left:588.8px;top:-1px;width:2px;height:132.2px;background:#dde4ed"></div>
<div class="a" style="left:1031.0px;top:-1px;width:2px;height:132.2px;background:#dde4ed"></div>
<div class="a" style="left:1473.3px;top:-1px;width:2px;height:132.2px;background:#dde4ed"></div>
<div class="a" style="left:1718.3px;top:-1px;width:2px;height:132.2px;background:#dde4ed"></div>
<div class="t" style="left:0.0px;width:95.8px;text-align:center;top:15.0px;font-weight:bold;color:#515a6e">序号</div>
<div class="t" style="left:95.8px;width:494.0px;text-align:center;top:15.0px;font-weight:bold;color:#515a6e">费用项目</div>
<div class="t" style="left:589.8px;width:442.2px;text-align:center;top:15.0px;font-weight:bold;color:#515a6e">费用金额</div>
<div class="t" style="left:1032.0px;width:442.3px;text-align:center;top:15.0px;font-weight:bold;color:#515a6e">备注</div>
<div class="t" style="left:1474.3px;width:245.0px;text-align:center;top:15.0px;font-weight:bold;color:#515a6e">操作</div>
<div class="t" style="left:6.0px;width:95.8px;text-align:center;top:59.8px">1</div>
<div class="t" style="left:95.8px;width:494.0px;text-align:center;top:59.8px">运输费</div>
<div class="t" style="left:589.8px;width:442.2px;text-align:center;top:59.8px">0</div>
<div class="t" style="left:1032.0px;width:442.3px;text-align:center;top:59.8px"><span style="color:#c0c4cc">请输入</span></div>
<div class="t" style="left:1474.3px;width:245.0px;text-align:center;top:59.8px"><span style="color:#ff4242">删除</span></div>
<svg class="a" style="left:558.5px;top:61.8px" width="13" height="7" viewBox="0 0 13 7"><path d="M.6.6l5.9 5.9L12.4.6" fill="none" stroke="#c0c4cc" stroke-width="1.2"/></svg>
<div class="t" style="left:6px;width:95.8px;text-align:center;top:102.1px">合计</div>
<div class="t" style="left:589.8px;width:442.2px;text-align:center;top:102.1px">0</div>
</div>
<div class="inp" style="left:192.6px;top:1390.7px;width:1719.7px;height:200px"></div>
<div class="t" style="left:214.8px;top:1403.0px;color:#c0c4cc">合同条款</div>
<div class="a" style="left:2104px;top:0;width:30px;height:1485px;background:#fafafa;border-left:2px solid #e8e8e8;border-right:2px solid #ececec"></div>
<div class="a" style="left:2112px;top:5.8px;width:16px;height:926.2px;border-radius:8px;background:#c1c1c1"></div>
</div>
</body></html>
